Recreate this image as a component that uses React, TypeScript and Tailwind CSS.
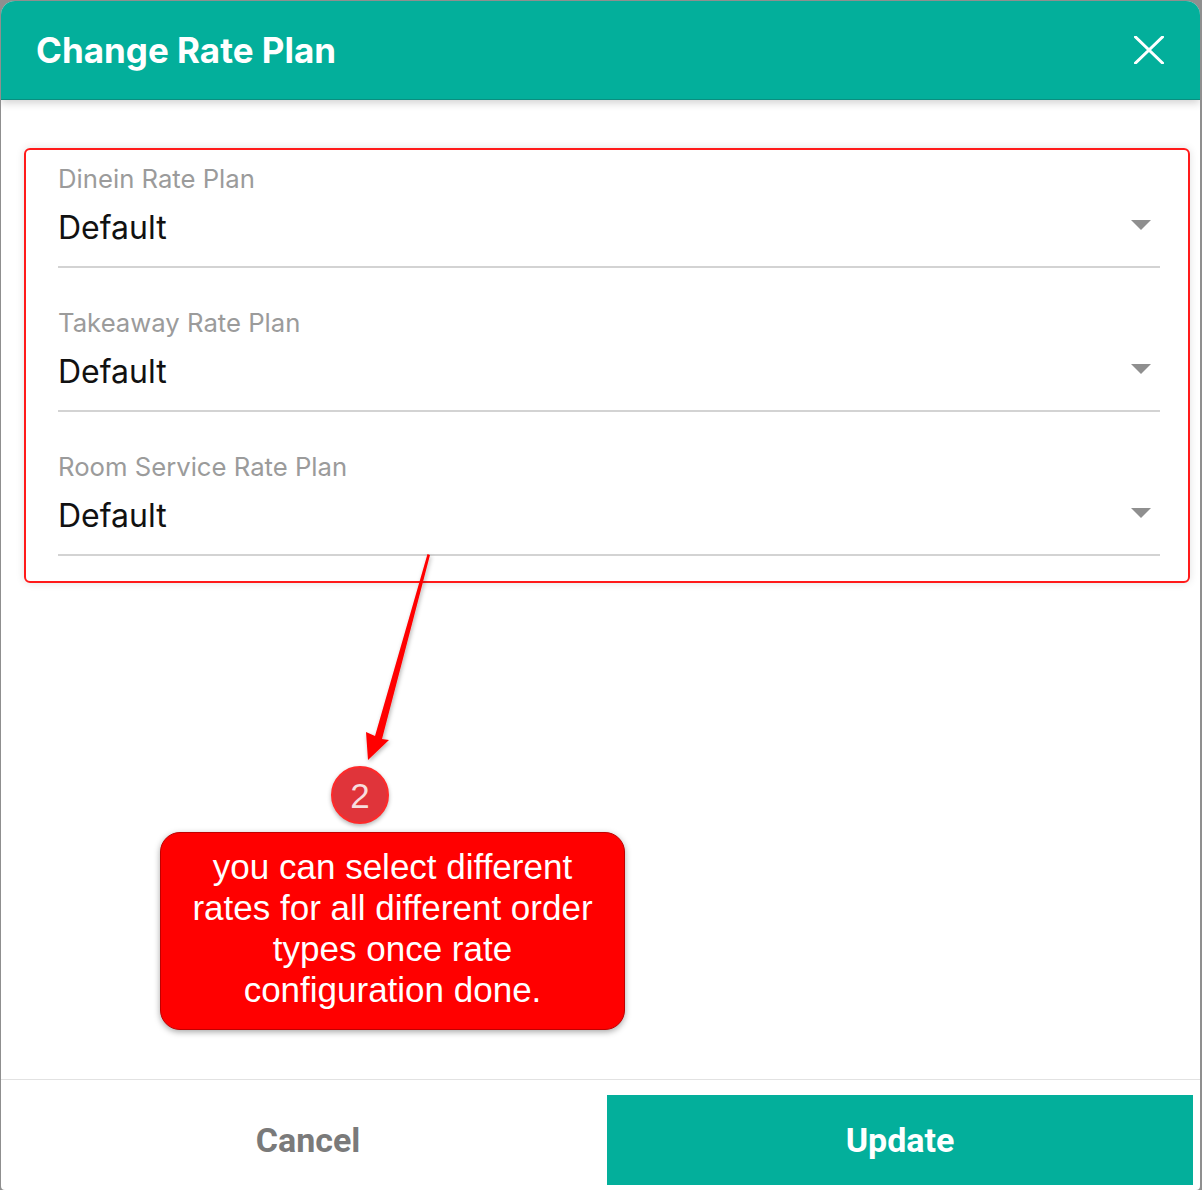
import React from "react";

const fields = ["Dinein Rate Plan", "Takeaway Rate Plan", "Room Service Rate Plan"];

function RatePlanSelect({ label, first }: { label: string; first: boolean }) {
  return (
    <div className={first ? "" : "mt-[40px]"}>
      <div className="text-[25.7px] leading-[30px] text-[#9b9b9b]">{label}</div>
      <div className="mt-[12px] flex items-center justify-between pr-[9px]">
        <span className="text-[32px] leading-[44px] text-[#111]">Default</span>
        <svg width="20" height="10" viewBox="0 0 20 10" className="-mt-[7px]">
          <polygon points="0,0 20,0 10,10" fill="#8f8f8f" />
        </svg>
      </div>
      <div className="mt-[16px] h-[2px] bg-[#d3d3d3]" />
    </div>
  );
}

export default function App() {
  return (
    <div className="relative w-[1202px] h-[1190px] overflow-hidden bg-[#8f8f8f] pl-px pr-[2px] pt-px">
      <div
        className="flex h-[1189px] flex-col overflow-hidden rounded-t-[14px] rounded-b-[4px] bg-white"
        style={{ fontFamily: "Inter, 'Noto Sans', sans-serif" }}
      >
        {/* Header */}
        <div className="relative z-10 flex h-[99px] shrink-0 items-center justify-between border-b border-[#0a8e7f] bg-[#03af9b] pl-[35px] pr-[36px] shadow-[0_3px_8px_rgba(0,0,0,0.18)]">
          <h1 className="text-[35px] font-bold leading-none text-white">Change Rate Plan</h1>
          <svg width="30" height="28" viewBox="0 0 30 28">
            <path d="M1.5 1 L28.5 27 M28.5 1 L1.5 27" stroke="#fff" strokeWidth="3" strokeLinecap="round" />
          </svg>
        </div>

        {/* Body */}
        <div className="flex-1 pl-[23px] pt-[48px]">
          <div className="w-[1166px] rounded-[6px] border-2 border-[#ff1a1a] pb-[25px] pl-[32px] pr-[28px] pt-[14px] shadow-[0_0_8px_rgba(0,0,0,0.12)]">
            {fields.map((f, i) => (
              <RatePlanSelect key={f} label={f} first={i === 0} />
            ))}
          </div>
        </div>

        {/* Footer */}
        <div
          className="flex h-[111px] shrink-0 border-t border-[#e2e2e2]"
          style={{ fontFamily: "Roboto, 'Noto Sans', sans-serif" }}
        >
          <button className="mt-[15px] h-[90px] flex-1 pl-[8px] text-[34px] font-bold text-[#7a7a7a]">Cancel</button>
          <button className="mr-[7px] mt-[15px] h-[90px] w-[586px] bg-[#03af9b] text-[34px] font-bold text-white">
            Update
          </button>
        </div>
      </div>

      {/* Annotation: arrow */}
      <svg className="pointer-events-none absolute left-0 top-0" width="1202" height="1190">
        <defs>
          <filter id="sh" x="-20%" y="-20%" width="140%" height="140%">
            <feDropShadow dx="1" dy="2" stdDeviation="2" floodColor="#000" floodOpacity="0.3" />
          </filter>
        </defs>
        <polygon
          points="427.5,554 430,555 382,739 389,740 368,760 366,732 375,736"
          fill="#ff0000"
          filter="url(#sh)"
        />
      </svg>

      {/* Annotation: step badge */}
      <div
        className="absolute left-[331px] top-[766px] flex h-[58px] w-[58px] items-center justify-center rounded-full border-2 border-[#ff2a2a] bg-[#e0343a] text-[35px] leading-none text-[#f7dede] shadow-[0_2px_4px_rgba(0,0,0,0.3)]"
        style={{ fontFamily: "'Liberation Sans', Arial, sans-serif" }}
      >
        2
      </div>

      {/* Annotation: callout */}
      <div
        className="absolute left-[160px] top-[832px] h-[198px] w-[465px] rounded-[20px] border border-[#c00000] bg-[#ff0000] pt-[13px] text-center text-[35px] leading-[41px] text-white shadow-[0_2px_6px_rgba(0,0,0,0.35)]"
        style={{ fontFamily: "'Liberation Sans', Arial, sans-serif" }}
      >
        you can select different
        <br />
        rates for all different order
        <br />
        types once rate
        <br />
        configuration done.
      </div>
    </div>
  );
}
